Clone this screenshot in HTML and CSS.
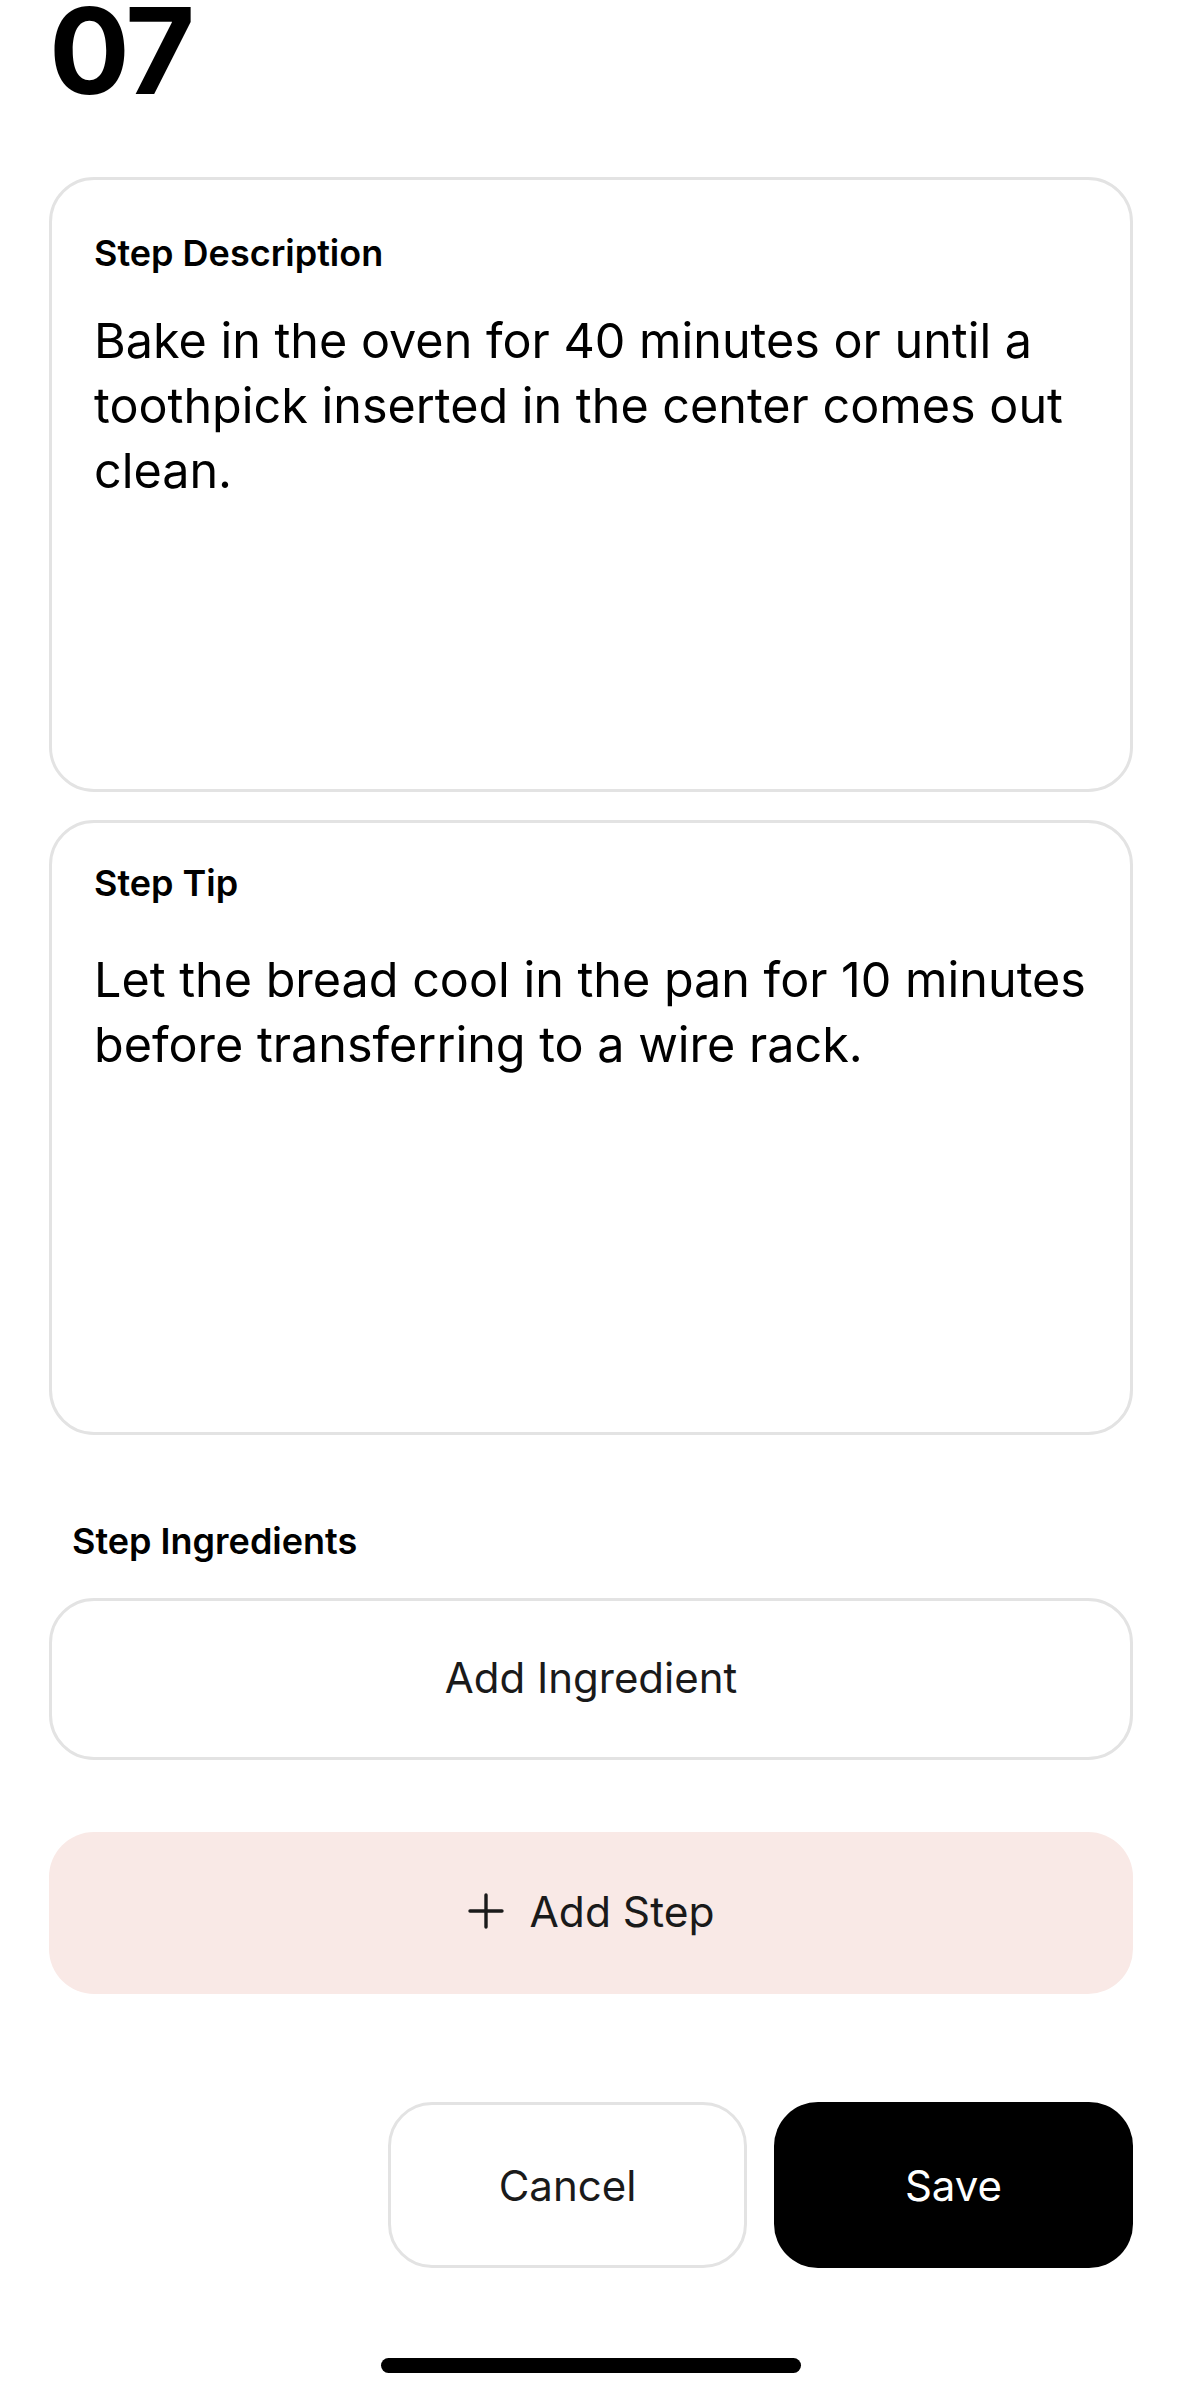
FILE: index.html
```html
<!DOCTYPE html>
<html lang="en">
<head>
<meta charset="utf-8">
<title>Edit Step</title>
<link rel="stylesheet" href="styles.css">
</head>
<body>
<main class="page">
  <h1 class="step-number">07</h1>

  <section class="field-card field-card--desc">
    <div class="field-label">Step Description</div>
    <p class="field-text">Bake in the oven for 40 minutes or until a toothpick inserted in the center comes out clean.</p>
  </section>

  <section class="field-card field-card--tip">
    <div class="field-label">Step Tip</div>
    <p class="field-text">Let the bread cool in the pan for 10 minutes before transferring to a wire rack.</p>
  </section>

  <div class="section-label">Step Ingredients</div>
  <button class="outline-btn add-ingredient" type="button">Add Ingredient</button>

  <button class="add-step" type="button">
    <svg class="plus" width="36" height="36" viewBox="0 0 36 36" aria-hidden="true">
      <path d="M18 2 V34 M2 18 H34" stroke="#1a1a1a" stroke-width="3.4" stroke-linecap="round" fill="none"/>
    </svg>
    <span>Add Step</span>
  </button>

  <div class="actions">
    <button class="outline-btn action" type="button">Cancel</button>
    <button class="primary-btn action" type="button">Save</button>
  </div>

  <div class="home-indicator"></div>
</main>
</body>
</html>
```

FILE: styles.css
```css
* { box-sizing: border-box; }

html, body {
  margin: 0;
  padding: 0;
  background: #ffffff;
}

body {
  font-family: Inter, "Noto Sans", "Liberation Sans", sans-serif;
  color: #000;
  width: 1179px;
  height: 2396px;
  overflow: hidden;
}

.page {
  padding: 0 46px 0 49px;
  display: flex;
  flex-direction: column;
}

.step-number {
  margin: 0;
  font-size: 120px;
  line-height: 102px;
  height: 111px;
  font-weight: 700;
  letter-spacing: -0.02em;
}

.field-card {
  border: 3px solid #e3e3e3;
  border-radius: 45px;
  height: 615px;
  padding: 0 42px;
  background: #fff;
}

.field-card--desc {
  margin-top: 66px;
  padding-top: 52px;
}

.field-card--tip {
  margin-top: 28px;
  padding-top: 39px;
}

.field-label {
  font-size: 36px;
  line-height: 42px;
  font-weight: 600;
}

.field-text {
  font-size: 48.5px;
  line-height: 65px;
  font-weight: 400;
  margin: 0;
}

.field-card--desc .field-text { margin-top: 34px; }
.field-card--tip .field-text { margin-top: 43px; }

.section-label {
  margin: 85px 0 0 23px;
  font-size: 36px;
  line-height: 42px;
  font-weight: 600;
}

button {
  font-family: inherit;
  cursor: pointer;
}

.outline-btn {
  background: #fff;
  border: 3px solid #e3e3e3;
  color: #1a1a1a;
  font-size: 42px;
  font-weight: 400;
}

.add-ingredient {
  margin-top: 36px;
  height: 162px;
  border-radius: 45px;
  width: 100%;
  padding-bottom: 4px;
}

.add-step {
  margin-top: 72px;
  height: 162px;
  width: 100%;
  border: none;
  border-radius: 45px;
  background: #f9e9e6;
  color: #1a1a1a;
  font-size: 42.5px;
  font-weight: 400;
  display: flex;
  align-items: center;
  justify-content: center;
  gap: 26px;
  padding: 0 0 4px 0;
}

.plus { display: block; }

.actions {
  margin-top: 108px;
  display: flex;
  justify-content: flex-end;
  gap: 27px;
}

.action {
  width: 359px;
  height: 166px;
  border-radius: 44px;
}

.primary-btn {
  background: #000;
  color: #fff;
  border: none;
  font-size: 42px;
  font-weight: 400;
}

.home-indicator {
  margin: 90px auto 0;
  width: 420px;
  height: 15px;
  border-radius: 8px;
  background: #000;
}
```
